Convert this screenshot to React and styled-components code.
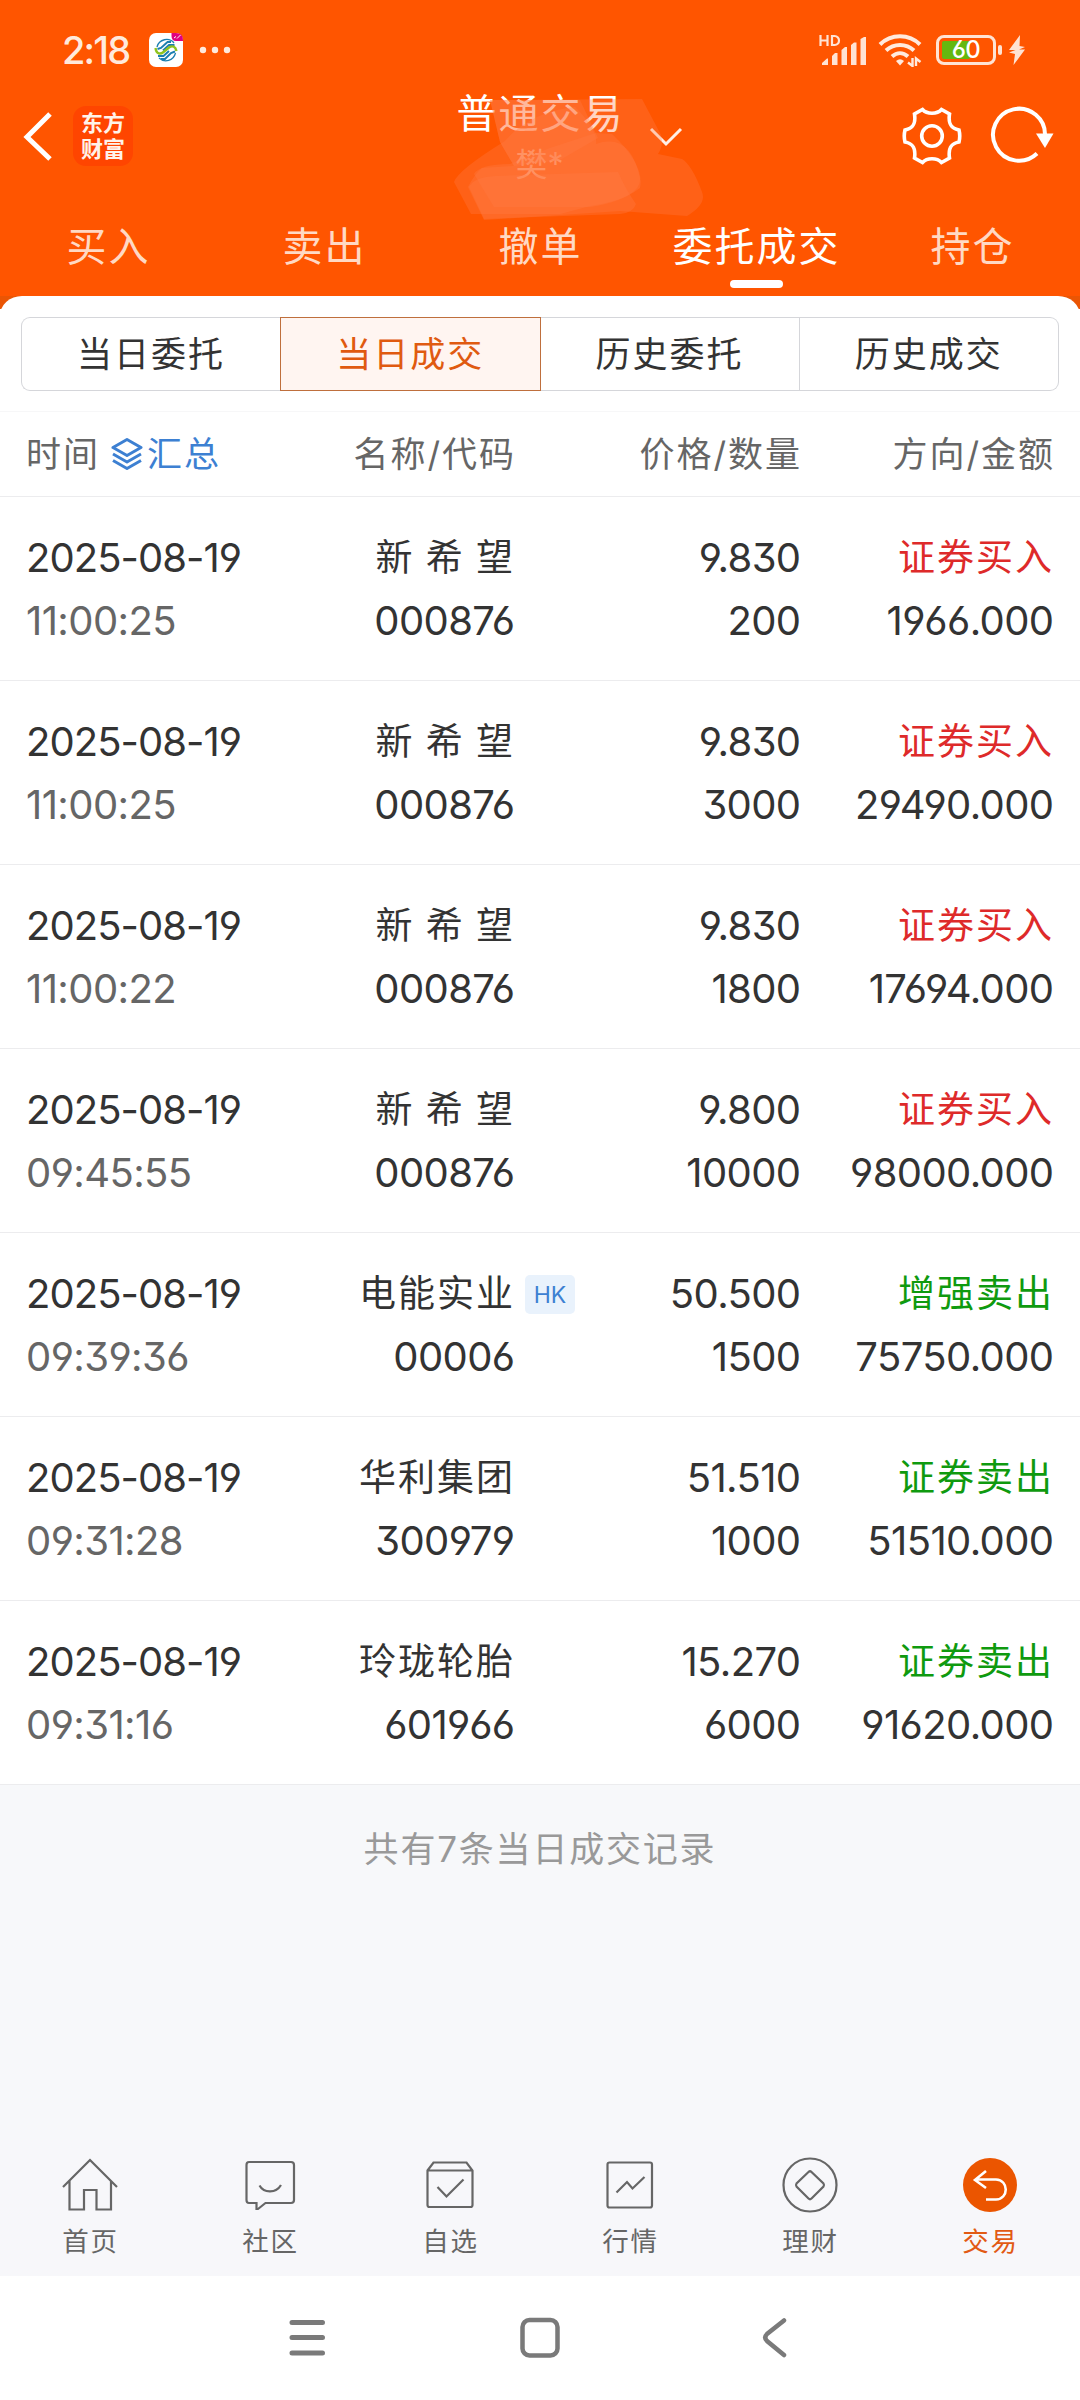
import React from 'react';
import styled, { createGlobalStyle } from 'styled-components';

const GlobalStyle = createGlobalStyle`
  * {
    box-sizing: border-box;
  }
  body {
    margin: 0;
    background: #fff;
    font-family: Inter, 'Noto Sans CJK SC', sans-serif;
    font-feature-settings: 'cv03', 'cv04', 'cv09';
    color: #333;
  }
`;

const Page = styled.div`
  width: 1080px;
  height: 2400px;
  display: flex;
  flex-direction: column;
  background: #f7f8fa;
  overflow: hidden;
`;

const Header = styled.header`
  height: 296px;
  flex: none;
  background: #ff5500;
  color: #fff;
`;

const StatusBar = styled.div`
  height: 90px;
  padding: 10px 54px 0 62px;
  display: flex;
  align-items: center;
  justify-content: space-between;
  color: #ffeadd;
`;

const StatusGroup = styled.div`
  display: flex;
  align-items: center;
`;

const Clock = styled.span`
  width: 87px;
  font-size: 38px;
  font-weight: 500;
  line-height: 40px;
  letter-spacing: -1.8px;
`;

const Signal = styled.svg`
  margin-right: 12px;
`;

const Battery = styled.div`
  width: 60px;
  height: 30px;
  margin: 0 2px 0 14px;
  border: 3px solid #ffe3d3;
  border-radius: 8px;
  padding: 3px;
  position: relative;
  display: flex;
`;

const BatteryLevel = styled.div`
  width: 28px;
  background: #64b80f;
  border-radius: 2px;
`;

const BatteryText = styled.span`
  position: absolute;
  inset: 0;
  text-align: center;
  font-size: 24px;
  font-weight: 500;
  line-height: 24px;
  letter-spacing: -0.5px;
  color: #fff;
`;

const BatteryTip = styled.div`
  width: 4px;
  height: 10px;
  border-radius: 2px;
  background: #ffe3d3;
  margin-right: 6px;
`;

const TitleBar = styled.div`
  height: 110px;
  padding: 0 25px 0 22px;
  display: grid;
  grid-template-columns: 1fr auto 1fr;
`;

const TitleSide = styled.div`
  height: 92px;
  display: flex;
  align-items: center;
  justify-content: ${(props) => (props.$right ? 'flex-end' : 'flex-start')};
  gap: ${(props) => (props.$right ? '27px' : '19px')};
`;

const BrandLogo = styled.div`
  width: 60px;
  height: 60px;
  border-radius: 13px;
  background: #ff4500;
  color: #fff3ea;
  display: flex;
  flex-direction: column;
  align-items: center;
  justify-content: center;
  font-size: 22px;
  line-height: 26px;
  font-weight: 700;
`;

const TitleBox = styled.div`
  position: relative;
  width: 164px;
  text-align: center;
  white-space: nowrap;
`;

const Title = styled.div`
  height: 50px;
  line-height: 48px;
  font-size: 40px;
  letter-spacing: 2px;
`;

const Account = styled.div`
  line-height: 50px;
  font-size: 32px;
  color: #ffc3a2;
  padding-left: 2px;
`;

const Smudge = styled.svg`
  position: absolute;
  left: -27px;
  top: -20px;
`;

const ArrowDown = styled.svg`
  position: absolute;
  left: 192px;
  top: 36px;
`;

const Tabs = styled.nav`
  height: 96px;
  display: grid;
  grid-template-columns: repeat(5, 1fr);
`;

const Tab = styled.div`
  display: flex;
  flex-direction: column;
  align-items: center;
  font-size: 40px;
  letter-spacing: 2px;
  line-height: 60px;
  padding: 17px 0 0 1px;
  color: ${(props) => (props.$active ? '#fff' : '#ffd9c4')};

  &::after {
    content: '';
    width: 53px;
    height: 8px;
    margin-top: 3px;
    border-radius: 4px;
    background: ${(props) => (props.$active ? '#fff' : 'transparent')};
  }
`;

const PanelBack = styled.div`
  background: linear-gradient(#ea5504 13px, #fff 13px);
`;

const Panel = styled.main`
  background: #fff;
  border-radius: 22px 22px 0 0 / 20px 20px 0 0;
`;

const Segments = styled.div`
  height: 116px;
  padding: 21px 21px 0;
  display: flex;
  border-bottom: 1px solid #f7f7f8;
`;

const Segment = styled.div`
  flex: 1;
  height: 74px;
  line-height: 73px;
  text-align: center;
  font-size: 35px;
  letter-spacing: 2px;
  border: 1px solid ${(props) => (props.$active ? '#bf6f3d' : '#d5d6da')};
  background: ${(props) => (props.$active ? '#fff5f1' : '#fff')};
  color: ${(props) => (props.$active ? '#e05a10' : '#333')};

  &:first-child {
    border-radius: 9px 0 0 9px;
    border-right: none;
  }
  &:nth-child(3) {
    border-left: none;
  }
  &:last-child {
    border-left: none;
    border-radius: 0 9px 9px 0;
  }
`;

const Columns = styled.div`
  display: grid;
  grid-template-columns: 287px 200px 286px 253px;
  padding: 0 28px 0 26px;
  text-align: right;
  border-bottom: 1px solid #ececee;
`;

const HeadRow = styled(Columns)`
  height: 85px;
  line-height: 84px;
  font-size: 35px;
  letter-spacing: 2px;
  color: #666;

  & > div {
    margin-right: -3px;
    white-space: nowrap;
  }
`;

const HeadTime = styled.div`
  display: flex;
  align-items: center;
`;

const Summary = styled.span`
  display: flex;
  align-items: center;
  gap: 4px;
  margin-left: 11px;
  color: #3d80d2;
`;

const TradeRow = styled(Columns)`
  height: 184px;
  padding-top: 29px;
  line-height: 63px;
  white-space: nowrap;
`;

const Num = styled.div`
  font-size: 40px;
  letter-spacing: ${(props) => (props.$date ? '-0.95px' : '-0.6px')};
  margin-right: -1.5px;
  color: ${(props) => (props.$muted ? '#666' : '#333')};
`;

const Cell = styled.div`
  text-align: ${(props) => (props.$left ? 'left' : 'right')};
`;

const Name = styled.div`
  position: relative;
  font-size: 37px;
  letter-spacing: 2px;
  word-spacing: -1.2px;
  margin-right: -2px;
`;

const Side = styled.div`
  font-size: 37px;
  letter-spacing: 2px;
  margin-right: -2px;
  color: ${(props) => (props.$buy ? '#de2a2a' : '#0f9a0f')};
`;

const Market = styled.span`
  position: absolute;
  left: calc(100% + 10px);
  top: 13px;
  width: 50px;
  height: 39px;
  line-height: 40px;
  border-radius: 5px;
  background: #e9f2fc;
  color: #3d80d2;
  font-size: 23px;
  letter-spacing: 0;
  text-align: center;
`;

const Total = styled.div`
  flex: 1;
  padding-top: 38px;
  text-align: center;
  font-size: 35px;
  line-height: 52px;
  letter-spacing: 1.8px;
  color: #999;
`;

const BottomNav = styled.nav`
  height: 136px;
  flex: none;
  background: #f7f7fa;
  display: grid;
  grid-template-columns: repeat(6, 1fr);
`;

const NavItem = styled.div`
  display: flex;
  flex-direction: column;
  align-items: center;
  padding-top: 15px;
  font-size: 26.5px;
  line-height: 30px;
  letter-spacing: 1.8px;
  text-indent: 1px;
  color: ${(props) => (props.$active ? '#e25a14' : '#666')};

  svg {
    display: block;
    margin-bottom: 11px;
  }
`;

const SystemBar = styled.div`
  height: 124px;
  flex: none;
  background: #fff;
  display: flex;
  justify-content: center;
  gap: 174px;
  padding-top: 32px;
`;

const tabs = ['买入', '卖出', '撤单', '委托成交', '持仓'];
const segments = ['当日委托', '当日成交', '历史委托', '历史成交'];

const trades = [
  { time: '11:00:25', name: '新 希 望', code: '000876', price: '9.830', count: '200', side: '证券买入', amount: '1966.000' },
  { time: '11:00:25', name: '新 希 望', code: '000876', price: '9.830', count: '3000', side: '证券买入', amount: '29490.000' },
  { time: '11:00:22', name: '新 希 望', code: '000876', price: '9.830', count: '1800', side: '证券买入', amount: '17694.000' },
  { time: '09:45:55', name: '新 希 望', code: '000876', price: '9.800', count: '10000', side: '证券买入', amount: '98000.000' },
  { time: '09:39:36', name: '电能实业', market: 'HK', code: '00006', price: '50.500', count: '1500', side: '增强卖出', amount: '75750.000' },
  { time: '09:31:28', name: '华利集团', code: '300979', price: '51.510', count: '1000', side: '证券卖出', amount: '51510.000' },
  { time: '09:31:16', name: '玲珑轮胎', code: '601966', price: '15.270', count: '6000', side: '证券卖出', amount: '91620.000' },
];

const navItems = [
  {
    label: '首页',
    icon: <path d="M3 32 L30 5 L57 32 M9.500 26 V54.500 H24 V35 H36.500 V54.500 H51 V26" />,
  },
  {
    label: '社区',
    icon: (
      <>
        <path d="M9 7 H51 Q54 7 54 10 V45 Q54 48 51 48 H25.500 L18 54 H16.500 V48 H9 Q6.500 48 6.500 45 V10 Q6.500 7 9 7 Z" />
        <path d="M19.500 30.500 C24 38.500 36 38.500 41 30" />
      </>
    ),
  },
  {
    label: '自选',
    icon: (
      <>
        <path d="M7.500 15.500 L13.500 7.500 H46.500 L52.500 15.500 V50 Q52.500 52 50.500 52 H9.500 Q7.500 52 7.500 50 Z M7.500 15.500 H52.500" />
        <path d="M17.500 32 L26.500 41.500 L43.500 24.500" />
      </>
    ),
  },
  {
    label: '行情',
    icon: (
      <>
        <rect x="7.500" y="7.500" width="44.500" height="45" rx="2" />
        <path d="M16.500 37.500 L27 27 L32.500 33.500 L44.500 22" />
      </>
    ),
  },
  {
    label: '理财',
    icon: (
      <>
        <circle cx="30" cy="30" r="26.500" />
        <path d="M28.500 17 Q30 15.500 31.500 17 L43.500 28.500 Q44.500 30 43.500 31.500 L31.500 43.500 Q30 45 28.500 43.500 L16.500 31.500 Q15.500 30 16.500 28.500 Z" />
      </>
    ),
  },
  {
    label: '交易',
    active: true,
    icon: (
      <>
        <circle cx="30" cy="30" r="27" fill="#eb5500" stroke="none" />
        <path d="M26 16 L15 25 L26 33 M15 24.500 H36 C49 25 49 44 36 44.500 H26" stroke="#fff" strokeWidth="2.600" />
      </>
    ),
  },
];

function AppBadge() {
  return (
    <svg width="34" height="34" viewBox="0 0 34 34">
      <rect width="34" height="34" rx="7" fill="#fff" />
      <path d="M22.500 0 H27 Q34 0 34 7 V8 H27 Q22.500 8 22.500 3 Z" fill="#e0007f" />
      <path d="M25 5 L27 3.500 M28 5.500 L31.500 2" stroke="#fff" strokeWidth="1" />
      <g fill="none" strokeWidth="1.900">
        <path d="M8 14 C10 6 20 4 25 10" stroke="#1b7fb0" strokeWidth="1.300" />
        <path d="M8.500 16 L12 15 L18.500 9 H22" stroke="#1b7fb0" />
        <path d="M14 17.500 L20 12 H25.500" stroke="#1b7fb0" />
        <path d="M6.500 15 C7.500 21.500 11.500 21.500 14.500 19 L20 14.500 C24 12 26.500 14 27.500 18" stroke="#8fc31f" strokeWidth="2.400" />
        <path d="M9 23 H14.500 L20 18" stroke="#1b7fb0" />
        <path d="M12 26 H16 L22 20 L26 18.500" stroke="#1b7fb0" />
        <path d="M26.500 20 C24.500 28 15.500 30 10 25" stroke="#1b7fb0" strokeWidth="1.300" />
      </g>
    </svg>
  );
}

function StatusIcons() {
  return (
    <StatusGroup>
      <Signal width="47" height="34" viewBox="0 0 47 34">
        <g fill="none" stroke="#ffe3d3" strokeWidth="2.200">
          <path d="M1.500 2 V13 M8.500 2 V13 M1.500 7.500 H8.500" />
          <path d="M13 3 V12 H15.500 C21.500 12 21.500 3 15.500 3 Z" />
        </g>
        <g fill="#ffe3d3">
          <path d="M3 30 L8 25.500 H9 V32 H3 Z" />
          <path d="M13 23 L16 20 H18.500 V32 H13 Z" />
          <path d="M22.500 17 L26 14 H28 V32 H22.500 Z" />
          <path d="M32 12 L35 9.500 H37.500 V32 H32 Z" />
          <path d="M41.500 6 L45 4 H47 V32 H41.500 Z" />
        </g>
      </Signal>
      <svg width="44" height="34" viewBox="0 0 44 34">
        <g fill="none" stroke="#ffeadd" strokeWidth="4">
          <path d="M2 11.500 C13 0.500 31 0.500 42 11.500" />
          <path d="M8 17.500 C16 10 28 10 36 17.500" />
          <path d="M14 23.500 C19 19 25 19 30 23.500" />
        </g>
        <path d="M18 28 Q22 24.500 26 28 L22 32.500 Z" fill="#ffeadd" />
        <path d="M34.500 25 V33 L30 29.500 M38 33 V25.500 L42.500 29" fill="none" stroke="#ffeadd" strokeWidth="2.400" />
      </svg>
      <Battery>
        <BatteryLevel />
        <BatteryText>60</BatteryText>
      </Battery>
      <BatteryTip />
      <svg width="18" height="32" viewBox="0 0 18 32">
        <path d="M12 1 L1 16 H7.500 L1 18.500 L7 20 L5.500 31 L17 15.500 H11 L17 13 L11.500 12 Z" fill="#ffe3d3" />
      </svg>
    </StatusGroup>
  );
}

function TopHeader() {
  return (
    <Header>
      <StatusBar>
        <StatusGroup>
          <Clock>2:18</Clock>
          <AppBadge />
          <svg width="48" height="8" viewBox="0 0 48 8">
            <g fill="#ffeadd">
              <circle cx="20" cy="4" r="3.200" />
              <circle cx="32" cy="4" r="3.200" />
              <circle cx="44" cy="4" r="3.200" />
            </g>
          </svg>
        </StatusGroup>
        <StatusIcons />
      </StatusBar>
      <TitleBar>
        <TitleSide>
          <svg width="32" height="52" viewBox="0 0 32 52">
            <path d="M28 4 L5 27 L28 49" fill="none" stroke="#fff" strokeWidth="5" />
          </svg>
          <BrandLogo>
            <span>东方</span>
            <span>财富</span>
          </BrandLogo>
        </TitleSide>
        <TitleBox>
          <Title>普通交易</Title>
          <Account>樊*</Account>
          <ArrowDown width="34" height="22" viewBox="0 0 34 22">
            <path d="M2 3 L17 18 L32 3" fill="none" stroke="#ffefe6" strokeWidth="3" />
          </ArrowDown>
          <Smudge width="300" height="160" viewBox="0 0 300 160">
            <g fill="#ff7c49" fillOpacity="0.32">
              <path d="M60 30 L212 29 L231 65 Q234 75 228 84 L252 89 Q262 95 272 122 Q277 134 257 146 L190 141 L54 150 L38 117 Q44 105 52 98 L84 96 L70 72 Z" />
              <path d="M24 112 Q28 100 75 71 Q100 42 145 37 Q168 60 166 74 Q200 62 210 108 Q212 128 160 136 L130 144 L41 144 Z" />
              <path d="M44 104 Q50 94 80 94 L120 78 L166 63 L182 64 Q215 95 210 118 Q190 133 160 137 L64 137 Z" />
              <path d="M39 117 Q44 107 66 106 L188 102 Q196 120 206 134 Q203 143 190 144 L54 149 Z" />
              <path d="M60 30 L150 30 L168 68 L130 90 L84 96 L70 72 Z" />
            </g>
          </Smudge>
        </TitleBox>
        <TitleSide $right>
          <svg width="60" height="60" viewBox="0 0 60 60" fill="none" stroke="#fff" strokeWidth="3.600">
            <path d="M20.500 3.500 C25 8.500 35 8.500 39.500 3.500 L47.500 8 C46 18 49 22.500 57 24 Q58.500 30 57 36 C49 37.500 46 42 47.500 52 L39.500 56.500 C35 51.500 25 51.500 20.500 56.500 L12.500 52 C14 42 11 37.500 3 36 Q1.500 30 3 24 C11 22.500 14 18 12.500 8 Z" />
            <circle cx="30" cy="30" r="10.300" />
          </svg>
          <svg width="66" height="60" viewBox="0 0 66 60">
            <path d="M48 47.500 A26 26 0 1 1 56 30" fill="none" stroke="#fff" strokeWidth="4" />
            <path d="M47 27.500 H64.500 L56 42 Z" fill="#fff" />
          </svg>
        </TitleSide>
      </TitleBar>
      <Tabs>
        {tabs.map((tab) => (
          <Tab key={tab} $active={tab === '委托成交'}>
            {tab}
          </Tab>
        ))}
      </Tabs>
    </Header>
  );
}

function Trade({ trade }) {
  return (
    <TradeRow>
      <Cell $left>
        <Num $date>2025-08-19</Num>
        <Num $muted>{trade.time}</Num>
      </Cell>
      <Cell>
        <Name>
          {trade.name}
          {trade.market && <Market>{trade.market}</Market>}
        </Name>
        <Num>{trade.code}</Num>
      </Cell>
      <Cell>
        <Num>{trade.price}</Num>
        <Num>{trade.count}</Num>
      </Cell>
      <Cell>
        <Side $buy={trade.side.includes('买入')}>{trade.side}</Side>
        <Num>{trade.amount}</Num>
      </Cell>
    </TradeRow>
  );
}

function App() {
  return (
    <Page>
      <GlobalStyle />
      <TopHeader />
      <PanelBack>
        <Panel>
          <Segments>
            {segments.map((item) => (
              <Segment key={item} $active={item === '当日成交'}>
                {item}
              </Segment>
            ))}
          </Segments>
          <HeadRow>
            <HeadTime>
              时间
              <Summary>
                <svg width="32" height="34" viewBox="0 0 32 34" fill="none" stroke="#3d80d2" strokeWidth="3" strokeLinejoin="round">
                  <path d="M16 2.500 L30 10.500 L16 18.500 L2 10.500 Z" />
                  <path d="M2 17 L16 25 L30 17 M2 23.500 L16 31.500 L30 23.500" />
                </svg>
                汇总
              </Summary>
            </HeadTime>
            <div>名称/代码</div>
            <div>价格/数量</div>
            <div>方向/金额</div>
          </HeadRow>
          {trades.map((trade, i) => (
            <Trade key={i} trade={trade} />
          ))}
        </Panel>
      </PanelBack>
      <Total>共有{trades.length}条当日成交记录</Total>
      <BottomNav>
        {navItems.map((item) => (
          <NavItem key={item.label} $active={item.active}>
            <svg width="60" height="60" viewBox="0 0 60 60" fill="none" stroke="#666" strokeWidth="2.200">
              {item.icon}
            </svg>
            {item.label}
          </NavItem>
        ))}
      </BottomNav>
      <SystemBar>
        <svg width="60" height="60" viewBox="0 0 60 60">
          <path d="M18.500 14.500 H49 M18.500 29.500 H49 M18.500 45 H49" transform="translate(-2.500 0)" stroke="#7a7a7a" strokeWidth="5" strokeLinecap="round" />
        </svg>
        <svg width="60" height="60" viewBox="0 0 60 60">
          <rect x="12.500" y="12" width="35" height="35.500" rx="7" fill="none" stroke="#7a7a7a" strokeWidth="4.500" />
        </svg>
        <svg width="60" height="60" viewBox="0 0 60 60">
          <path d="M40 12.500 L23 26 Q19.500 29.500 23 33 L40 47" fill="none" stroke="#7a7a7a" strokeWidth="4.500" strokeLinecap="round" />
        </svg>
      </SystemBar>
    </Page>
  );
}

export default App;
